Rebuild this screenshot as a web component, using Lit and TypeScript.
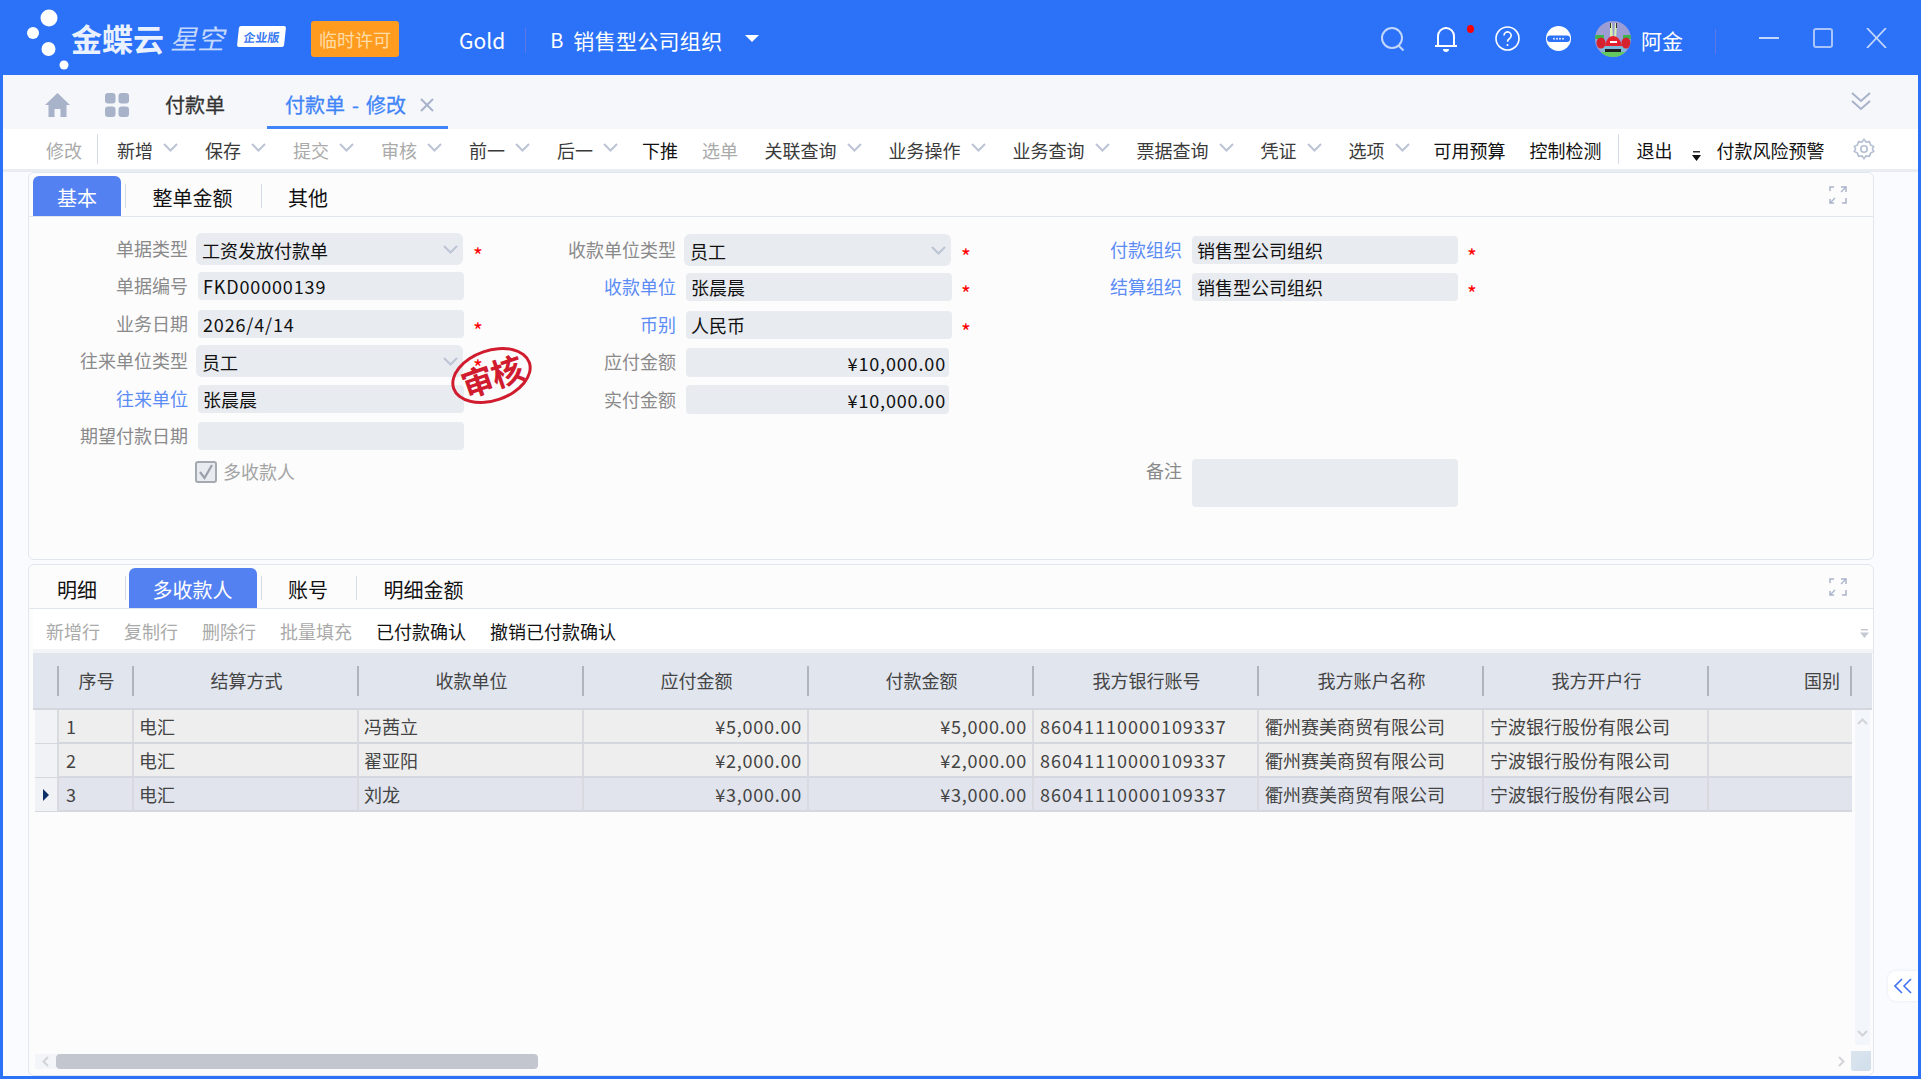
import { LitElement, css, html, svg } from 'lit'
import { customElement } from 'lit/decorators.js'
import { classMap } from 'lit/directives/class-map.js'

const chevron = svg`<polyline points="1,1 7.5,7.5 14,1" fill="none" stroke="#bcc4d6" stroke-width="2"/>`

type ToolItem = { text: string; off?: boolean; menu?: boolean; cls?: string }

const toolItems: ToolItem[] = [
  { text: '新增', menu: true },
  { text: '保存', menu: true },
  { text: '提交', menu: true, off: true },
  { text: '审核', menu: true, off: true },
  { text: '前一', menu: true },
  { text: '后一', menu: true, cls: 'tight' },
  { text: '下推', cls: 'dark' },
  { text: '选单', off: true, cls: 'loose' },
  { text: '关联查询', menu: true },
  { text: '业务操作', menu: true },
  { text: '业务查询', menu: true },
  { text: '票据查询', menu: true },
  { text: '凭证', menu: true },
  { text: '选项', menu: true, cls: 'tight' },
  { text: '可用预算', cls: 'dark' },
  { text: '控制检测', cls: 'dark' },
]

const headers = ['序号', '结算方式', '收款单位', '应付金额', '付款金额', '我方银行账号', '我方账户名称', '我方开户行', '国别']

const rows = [
  ['1', '电汇', '冯茜立', '¥5,000.00', '¥5,000.00'],
  ['2', '电汇', '翟亚阳', '¥2,000.00', '¥2,000.00'],
  ['3', '电汇', '刘龙', '¥3,000.00', '¥3,000.00'],
]

@customElement('app-root')
export class AppRoot extends LitElement {
  static styles = css`
    :host {
      display: block;
      position: relative;
      width: 1921px;
      height: 1079px;
      overflow: hidden;
      background: #2b72f9;
      font-family: 'Noto Sans CJK SC', 'Noto Sans', sans-serif;
      font-size: 18px;
      color: #222;
    }
    svg { display: block; flex: none; }

    /* top bar */
    .top {
      height: 75px;
      display: flex;
      align-items: center;
      padding-right: 34px;
      color: #fff;
      line-height: 28px;
    }
    .logo-dots { width: 71px; height: 75px; }
    .brand { font-size: 31px; font-weight: 700; line-height: 40px; opacity: .9; }
    .brand2 { font-size: 27px; font-style: italic; font-weight: 400; margin-left: 6px; opacity: .72; line-height: 40px; }
    .edition {
      margin-left: 14px;
      margin-top: -2px;
      width: 47px;
      height: 21px;
      background: #fff;
      color: #3b7af0;
      font-size: 12px;
      font-weight: 700;
      line-height: 21px;
      text-align: center;
      border-radius: 2px;
      transform: skewX(-6deg);
      overflow: hidden;
      white-space: nowrap;
    }
    .license {
      margin-left: 26px;
      margin-top: 3px;
      width: 88px;
      height: 36px;
      background: #ff9c1f;
      color: #ffdca8;
      border-radius: 3px;
      text-align: center;
      line-height: 36px;
      font-size: 18px;
    }
    .gold { margin-left: 60px; margin-top: 4px; font-size: 21px; }
    .bar-sep { width: 1px; height: 25px; background: #5d78e6; flex: none; margin-top: 6px; }
    .gold + .bar-sep { margin-left: 20px; }
    .org-b { margin-left: 24px; margin-top: 4px; font-size: 20px; }
    .org { margin-left: 10px; margin-top: 4px; font-size: 21px; letter-spacing: .3px; }
    .org-arrow { margin-left: 23px; margin-top: 2px; width: 0; height: 0; border-left: 7px solid transparent; border-right: 7px solid transparent; border-top: 7px solid #fff; }
    .right { margin-left: auto; display: flex; align-items: center; margin-top: 2px; }
    .i-bell { margin-left: 29px; position: relative; }
    .dot { position: absolute; left: 33px; top: -1px; width: 7px; height: 8px; border-radius: 50%; background: #f00; }
    .i-help { margin-left: 37px; }
    .i-min { margin-left: 26px; }
    .avatar { margin-left: 24px; width: 36px; height: 36px; }
    .user { margin-left: 10px; margin-top: 3px; font-size: 21px; }
    .user + .bar-sep { margin-left: 32px; }
    .w-min { margin-left: 43px; margin-top: -1px; }
    .w-max { margin-left: 34px; margin-top: -1px; }
    .w-close { margin-left: 33px; margin-top: -1px; }

    /* page under the bar */
    .page {
      height: 1001px;
      margin: 0 3px 3px;
      background: #f9fbff;
      display: flex;
      flex-direction: column;
    }
    .nav {
      height: 54px;
      box-sizing: border-box;
      padding: 6px 47px 0 42px;
      flex: none;
      background: #f5f7fb;
      display: flex;
      align-items: center;
      font-size: 20px;
      line-height: 30px;
    }
    .grid-icon { margin-left: 35px; }
    .nav-list { margin-left: 36px; color: #333; -webkit-text-stroke: .3px #333; }
    .nav-active {
      margin-left: 42px;
      height: 54px;
      width: 181px;
      padding: 9px 0 0 18px;
      box-sizing: border-box;
      align-self: flex-end;
      border-bottom: 3px solid #3f85f7;
      color: #3f85f7;
      -webkit-text-stroke: .3px #3f85f7;
      word-spacing: 2.5px;
      display: flex;
      align-items: center;
      white-space: nowrap;
    }
    .nav-x { margin-left: 14px; }
    .nav-fold { margin-left: auto; margin-top: -8px; }

    .tools {
      height: 38px;
      padding: 2px 0 0 43px;
      flex: none;
      box-sizing: content-box;
      background: #fff;
      border-bottom: 3px solid #e9ecf2;
      display: flex;
      align-items: center;
      line-height: 26px;
      color: #3a3a3a;
      white-space: nowrap;
    }
    .t-first { color: #aaa; }
    .t-sep { width: 1px; height: 30px; background: #d5dbe6; flex: none; margin-top: -2px; }
    .t-first + .t-sep { margin: -2px 19px 0 15px; }
    .t-item { display: flex; align-items: center; margin-right: 24px; }
    .t-item.menu { margin-right: 27px; }
    .t-item.tight { margin-right: 24px; }
    .t-item.loose { margin-right: 26.5px; }
    .t-item.off { color: #aaa; }
    .t-item.dark { color: #111; }
    .t-item svg { margin: -5px 0 0 10px; }
    .t-end-sep { width: 1px; height: 30px; background: #d5dbe6; flex: none; margin: -2px 18px 0 -8px; }
    .t-exit { color: #111; }
    .t-down { margin: 12px 0 0 19px; }
    .t-risk { margin-left: 16px; color: #111; }
    .t-gear { margin-left: 28px; margin-top: -2px; }

    /* panels */
    .panel {
      margin-left: 25px;
      width: 1846px;
      box-sizing: border-box;
      background: #fcfcfd;
      border: 1px solid #e2e6ef;
      border-radius: 6px;
    }
    .upper { height: 388px; flex: none; margin-bottom: 4px; }
    .lower { flex: 1; min-height: 0; display: flex; flex-direction: column; }

    .tabs {
      flex: none;
      height: 40px;
      margin-top: 3px;
      padding: 0 26px 0 4px;
      border-bottom: 1px solid #e2e6ef;
      display: flex;
      align-items: center;
      font-size: 20px;
      color: #111;
    }
    .tab { padding: 0 24px; height: 40px; line-height: 43px; }
    .tab.on { background: #5481f2; color: #fff; border-radius: 6px 6px 0 0; }
    .tab-sep { width: 1px; height: 24px; background: #d5dbe6; margin: 0 2.5px 0 4px; flex: none; }
    .expand { margin-left: auto; margin-top: -3px; }

    .form { display: flex; padding: 13px 0 0 1px; position: relative; }
    .col {
      width: 488px;
      flex: none;
      display: grid;
      grid-template-columns: 158px 266px 1fr;
      column-gap: 10px;
      grid-auto-rows: 37.5px;
      align-items: center;
    }
    .col.second { margin-top: 1px; }
    .col.third { margin-left: 18px; margin-top: 1px; }
    .lbl { text-align: right; color: #8a8a8a; line-height: 24px; margin-top: -2px; white-space: nowrap; }
    .lbl.link { color: #5b8cf5; }
    .field {
      height: 28px;
      background: #e8ebf0;
      border-radius: 4px;
      padding: 0 5px;
      line-height: 29px;
      color: #111;
      white-space: nowrap;
    }
    .field.latin { letter-spacing: .85px; }
    .field.tall { height: 29px; line-height: 31px; }
    .field.num { text-align: right; padding-right: 3px; width: 255px; }
    .field.sel {
      height: 32px;
      width: 261px;
      margin-left: -2px;
      padding: 0 0 0 6px;
      line-height: 35px;
      border-radius: 6px;
      display: flex;
      justify-content: space-between;
    }
    .field.sel svg { margin: 12px 5px 0 0; }
    .star { color: #f00; font-size: 21px; line-height: 18px; padding: 8px 0 0 0; height: 14px; margin-left: -1px; }
    .check { grid-column: 2; display: flex; align-items: center; margin: -3px 0 0 -3px; color: #a4a4a4; line-height: 24px; }
    .check span { margin-top: -2px; }
    .box {
      width: 22px;
      height: 22px;
      box-sizing: border-box;
      border: 2px solid #a5a9b0;
      border-radius: 3px;
      background: #e8ebf0;
      margin-right: 6px;
    }
    .note-row { grid-row: 7; }
    .lbl.note-row { margin-top: -9px; }
    .note { height: 48px; align-self: start; margin-top: 3px; }

    .stamp {
      position: absolute;
      left: 421px;
      top: 132px;
      width: 77px;
      height: 47px;
      border: 3.5px solid #d01c2e;
      border-radius: 50%;
      transform: rotate(-19deg);
      color: #d01c2e;
      font-size: 32px;
      font-weight: 700;
      line-height: 47px;
      letter-spacing: -1px;
      text-align: center;
      white-space: nowrap;
    }

    /* grid */
    .subtools {
      flex: none;
      height: 37px;
      padding: 3px 4px 0 13px;
      margin: 0 0 0 4px;
      background: #fff;
      border-bottom: 4px solid #f3f4f6;
      display: flex;
      align-items: center;
      line-height: 26px;
      color: #111;
      white-space: nowrap;
    }
    .subtools span { margin-right: 24px; }
    .subtools span.off { color: #aaa; }
    .subtools svg { margin: 5px 0 0 auto; }
    .head {
      flex: none;
      margin: 0 1px 0 4px;
      height: 55px;
      background: #e1e5ee;
      border-bottom: 2px solid #d4d7dd;
      display: grid;
      grid-template-columns: 26px 75px repeat(7, 225px) 143px;
      color: #444;
      line-height: 55px;
      text-align: center;
    }
    .head div { position: relative; }
    .head div::after {
      content: '';
      position: absolute;
      right: 0;
      top: 13px;
      height: 30px;
      width: 2px;
      background: #b0b4bc;
    }
    .head .last { text-align: right; padding-right: 12px; }
    .body { flex: 1; min-height: 0; display: flex; margin: 0 5px 0 6px; }
    .rows { flex: 1; }
    .row {
      height: 34px;
      box-sizing: border-box;
      background: #eee;
      border-bottom: 2px solid #d4d7dd;
      display: grid;
      grid-template-columns: 24px 75px repeat(7, 225px) 143px;
      line-height: 33px;
      color: #444;
      white-space: nowrap;
    }
    .row.sel { background: #e1e4ed; }
    .row > div { border-right: 2px solid #d8dadf; padding: 0 6px 0 5px; min-width: 0; }
    .row > .mark { background: #f0f2f6; padding: 0; display: flex; align-items: center; justify-content: center; }
    .row > .num { text-align: right; padding-right: 5px; letter-spacing: .75px; }
    .row > .acct { letter-spacing: 1px; padding-left: 6px; }
    .row > .seq { padding-left: 7px; }
    .row > .wide { padding-left: 6px; }
    .row > .tail { border-right: none; }
    .vbar {
      width: 15px;
      flex: none;
      margin: 0 0 6px 3px;
      background: #f3f6fb;
      display: flex;
      flex-direction: column;
      justify-content: space-between;
      align-items: center;
      padding: 8px 0;
      box-sizing: border-box;
    }
    .foot { flex: none; height: 20px; margin: 0 2px 4px 6px; display: flex; align-items: center; }
    .arrow-left { width: 21px; height: 15px; background: #f3f5f9; display: flex; align-items: center; justify-content: center; }
    .thumb { width: 482px; height: 15px; background: #c3c6cf; border-radius: 4px; }
    .arrow-right { margin-left: auto; margin-right: 6px; }
    .corner { width: 20px; height: 20px; background: linear-gradient(135deg, #dbe5ef, #d0deeb); border-radius: 0 0 3px 3px; }

    .fold {
      position: absolute;
      right: 3px;
      top: 971px;
      width: 30px;
      height: 30px;
      background: #fff;
      border-radius: 8px 0 0 8px;
      box-shadow: 0 0 3px rgba(60, 80, 120, .12);
      display: flex;
      align-items: center;
      justify-content: center;
    }
  `

  private topBar() {
    return html`
      <div class="top">
        <svg class="logo-dots" viewBox="0 0 71 75">
          <circle cx="49" cy="18" r="8.5" fill="#fff"/>
          <circle cx="33" cy="33" r="6" fill="#fff"/>
          <circle cx="48.5" cy="49" r="7" fill="#fff"/>
          <circle cx="64" cy="65" r="4.5" fill="#fff"/>
        </svg>
        <span class="brand">金蝶云</span>
        <span class="brand2">星空</span>
        <div class="edition">企业版</div>
        <div class="license">临时许可</div>
        <span class="gold">Gold</span>
        <div class="bar-sep"></div>
        <span class="org-b">B</span>
        <span class="org">销售型公司组织</span>
        <div class="org-arrow"></div>
        <div class="right">
          <svg width="24" height="24" viewBox="0 0 24 24" fill="none" stroke="#c3d6fc" stroke-width="2">
            <circle cx="11" cy="11" r="10"/><line x1="17.5" y1="18.5" x2="22.5" y2="23.5"/>
          </svg>
          <div class="i-bell">
            <svg width="24" height="26" viewBox="0 0 24 26" fill="none" stroke="#fff" stroke-width="2">
              <path d="M1 20h22M4 20V10a8 8 0 0 1 16 0v10M12 1v1"/>
              <path d="M9 23h6a3 3 0 0 1-6 0z" fill="#fff" stroke="none"/>
            </svg>
            <div class="dot"></div>
          </div>
          <svg class="i-help" width="25" height="25" viewBox="0 0 25 25" fill="none" stroke="#fff" stroke-width="1.6">
            <circle cx="12.5" cy="12.5" r="11.5"/>
            <path d="M9 9.5a3.6 3.6 0 1 1 5.6 3c-1.4 1-2.1 1.6-2.1 3.3"/>
            <line x1="12.5" y1="18" x2="12.5" y2="20"/>
          </svg>
          <svg class="i-min" width="25" height="25" viewBox="0 0 25 25">
            <circle cx="12.5" cy="12.5" r="12.5" fill="#fff"/>
            <rect x="1" y="9.5" width="23" height="6.5" rx="3" fill="#2b72f9"/>
            <g fill="#dfe9fd"><circle cx="8" cy="12.7" r="1"/><circle cx="11" cy="12.7" r="1"/><circle cx="14" cy="12.7" r="1"/><circle cx="17" cy="12.7" r="1"/></g>
          </svg>
          <svg class="avatar" viewBox="0 0 36 36">
            <defs><clipPath id="av"><circle cx="18" cy="18" r="18"/></clipPath></defs>
            <g clip-path="url(#av)">
              <rect width="36" height="36" fill="#9c9dd4"/>
              <rect y="31" width="36" height="5" fill="#63c95f"/>
              <path d="M15 2h2l1 16h-3zM20 2h2l-1 16h-2z" fill="#d9f0b2"/>
              <path d="M15 2h1v5h-1zM21 2h1v5h-1z" fill="#333"/>
              <path d="M7 25h23l2 4-4 2H9l-4-2z" fill="#7fb9da"/>
              <rect x="10" y="28" width="16" height="3" fill="#1d1d1d"/>
              <path d="M18 15c4 0 8 4 9 10H10c1-6 4-10 8-10z" fill="#e3202b"/>
              <rect x="15" y="20" width="7" height="2" fill="#fff"/>
              <rect x="0" y="14" width="9" height="4" fill="#3eb34a"/>
              <rect x="28" y="14" width="8" height="4" fill="#3eb34a"/>
              <ellipse cx="6" cy="22" rx="4.5" ry="5.500" fill="#d6222c"/>
              <ellipse cx="31" cy="22" rx="4.500" ry="5.500" fill="#d6222c"/>
            </g>
          </svg>
          <span class="user">阿金</span>
          <div class="bar-sep"></div>
          <svg class="w-min" width="20" height="20" viewBox="0 0 20 20"><line x1="0" y1="10" x2="20" y2="10" stroke="#c3d6fc" stroke-width="2"/></svg>
          <svg class="w-max" width="20" height="20" viewBox="0 0 20 20"><rect x="1" y="1" width="18" height="18" rx="2" fill="none" stroke="#a9c4fa" stroke-width="2"/></svg>
          <svg class="w-close" width="21" height="20" viewBox="0 0 21 20" stroke="#c3d6fc" stroke-width="1.8"><line x1="1" y1="0" x2="20" y2="20"/><line x1="20" y1="0" x2="1" y2="20"/></svg>
        </div>
      </div>
    `
  }

  private navBar() {
    return html`
      <div class="nav">
        <svg width="25" height="24" viewBox="0 0 25 24" fill="#a8b3c9">
          <path d="M12.5 0L0 12h3.500v12h6v-8h6v8h6V12H25z"/>
        </svg>
        <svg class="grid-icon" width="24" height="24" viewBox="0 0 24 24" fill="#a8b3c9">
          <rect width="10.500" height="10.500" rx="3"/><rect x="13.500" width="10.500" height="10.500" rx="3"/>
          <rect y="13.500" width="10.500" height="10.500" rx="3"/><rect x="13.500" y="13.500" width="10.500" height="10.500" rx="3"/>
        </svg>
        <span class="nav-list">付款单</span>
        <div class="nav-active">付款单 - 修改
          <svg class="nav-x" width="14" height="14" viewBox="0 0 14 14" stroke="#a8b3c9" stroke-width="2"><line x1="1" y1="1" x2="13" y2="13"/><line x1="13" y1="1" x2="1" y2="13"/></svg>
        </div>
        <svg class="nav-fold" width="20" height="19" viewBox="0 0 20 19" fill="none" stroke="#a8b3c9" stroke-width="2">
          <polyline points="1,1 10,9 19,1"/><polyline points="1,9 10,17 19,9"/>
        </svg>
      </div>
    `
  }

  private toolBar() {
    return html`
      <div class="tools">
        <span class="t-first">修改</span>
        <div class="t-sep"></div>
        ${toolItems.map(i => html`
          <div class=${classMap({ 't-item': true, menu: !!i.menu, off: !!i.off, dark: i.cls === 'dark', tight: i.cls === 'tight', loose: i.cls === 'loose' })}>
            ${i.text}
            ${i.menu ? html`<svg width="15" height="9" viewBox="0 0 15 9">${chevron}</svg>` : ''}
          </div>
        `)}
        <div class="t-end-sep"></div>
        <span class="t-exit">退出</span>
        <svg class="t-down" width="9" height="10" viewBox="0 0 9 10"><rect x="1" y="0" width="7" height="1.500" fill="#333"/><path d="M0 4h9L4.500 10z" fill="#111"/></svg>
        <span class="t-risk">付款风险预警</span>
        <svg class="t-gear" width="22" height="24" viewBox="0 0 24 24" fill="none" stroke="#b5bfd3" stroke-width="1.800">
          <circle cx="12" cy="12" r="3.500"/>
          <path d="M12 1.500l2.200 3 3.700-.5 1.300 3.500 3.300 1.800-1.300 2.700 1.300 2.700-3.300 1.800-1.300 3.500-3.700-.5-2.200 3-2.200-3-3.700.5-1.300-3.500-3.300-1.800 1.300-2.700L1.500 9.300l3.300-1.800L6.100 4l3.700.5z"/>
        </svg>
      </div>
    `
  }

  private field(label: string, value: string, opts: { link?: boolean; sel?: boolean; star?: boolean; num?: boolean; tall?: boolean; latin?: boolean } = {}) {
    return html`
      <div class=${classMap({ lbl: true, link: !!opts.link })}>${label}</div>
      <div class=${classMap({ field: true, sel: !!opts.sel, num: !!opts.num, tall: !!opts.tall, latin: !!opts.latin || !!opts.num })}>
        <span>${value}</span>
        ${opts.sel ? html`<svg width="15" height="9" viewBox="0 0 15 9">${chevron}</svg>` : ''}
      </div>
      <div class="star">${opts.star ? '*' : ''}</div>
    `
  }

  private expandIcon() {
    return html`
      <svg class="expand" width="18" height="18" viewBox="0 0 18 18" fill="none" stroke="#a8b3c9" stroke-width="1.500">
        <path d="M1 5V1h4M12 1h5v5M17 12v5h-4M1 13v4h4"/>
        <path d="M17 1l-5 5M1 17l5-5" stroke-width="1.200"/>
      </svg>
    `
  }

  private upperPanel() {
    return html`
      <div class="panel upper">
        <div class="tabs">
          <div class="tab on">基本</div>
          <div class="tab-sep"></div>
          <div class="tab">整单金额</div>
          <div class="tab-sep"></div>
          <div class="tab">其他</div>
          ${this.expandIcon()}
        </div>
        <div class="form">
          <div class="col">
            ${this.field('单据类型', '工资发放付款单', { sel: true, star: true })}
            ${this.field('单据编号', 'FKD00000139', { latin: true })}
            ${this.field('业务日期', '2026/4/14', { star: true, latin: true })}
            ${this.field('往来单位类型', '员工', { sel: true, star: true })}
            ${this.field('往来单位', '张晨晨', { link: true })}
            ${this.field('期望付款日期', '')}
            <div class="check">
              <div class="box">
                <svg width="18" height="18" viewBox="0 0 18 18" fill="none" stroke="#9aa0a9" stroke-width="2.200"><polyline points="3,9 7.500,15 15,2"/></svg>
              </div>
              <span>多收款人</span>
            </div>
          </div>
          <div class="col second">
            ${this.field('收款单位类型', '员工', { sel: true, star: true })}
            ${this.field('收款单位', '张晨晨', { link: true, star: true })}
            ${this.field('币别', '人民币', { link: true, star: true })}
            ${this.field('应付金额', '¥10,000.00', { num: true, tall: true })}
            ${this.field('实付金额', '¥10,000.00', { num: true, tall: true })}
          </div>
          <div class="col third">
            ${this.field('付款组织', '销售型公司组织', { link: true, star: true })}
            ${this.field('结算组织', '销售型公司组织', { link: true, star: true })}
            <div class="lbl note-row">备注</div>
            <div class="field note-row note"></div>
          </div>
          <div class="stamp">审核</div>
        </div>
      </div>
    `
  }

  private lowerPanel() {
    return html`
      <div class="panel lower">
        <div class="tabs">
          <div class="tab">明细</div>
          <div class="tab-sep"></div>
          <div class="tab on">多收款人</div>
          <div class="tab-sep"></div>
          <div class="tab">账号</div>
          <div class="tab-sep"></div>
          <div class="tab">明细金额</div>
          ${this.expandIcon()}
        </div>
        <div class="subtools">
          <span class="off">新增行</span>
          <span class="off">复制行</span>
          <span class="off">删除行</span>
          <span class="off">批量填充</span>
          <span>已付款确认</span>
          <span>撤销已付款确认</span>
          <svg width="9" height="9" viewBox="0 0 9 9"><rect x="1" y="0" width="7" height="1.500" fill="#c5c9d2"/><path d="M0 3.500h9L4.500 9z" fill="#c5c9d2"/></svg>
        </div>
        <div class="head">
          <div></div>
          ${headers.map((h, i) => html`<div class=${i === headers.length - 1 ? 'last' : ''}>${h}</div>`)}
        </div>
        <div class="body">
          <div class="rows">
            ${rows.map((r, i) => html`
              <div class=${classMap({ row: true, sel: i === rows.length - 1 })}>
                <div class="mark">
                  ${i === rows.length - 1 ? html`<svg width="6" height="12" viewBox="0 0 6 12"><path d="M0 0l6 6-6 6z" fill="#0f2f6b"/></svg>` : ''}
                </div>
                <div class="seq">${r[0]}</div>
                <div>${r[1]}</div>
                <div>${r[2]}</div>
                <div class="num">${r[3]}</div>
                <div class="num">${r[4]}</div>
                <div class="acct">86041110000109337</div>
                <div class="wide">衢州赛美商贸有限公司</div>
                <div class="wide">宁波银行股份有限公司</div>
                <div class="tail"></div>
              </div>
            `)}
          </div>
          <div class="vbar">
            <svg width="11" height="7" viewBox="0 0 11 7" fill="none" stroke="#d2d4d9" stroke-width="2"><polyline points="1,6 5.500,1.500 10,6"/></svg>
            <svg width="11" height="7" viewBox="0 0 11 7" fill="none" stroke="#d2d4d9" stroke-width="2"><polyline points="1,1 5.500,5.500 10,1"/></svg>
          </div>
        </div>
        <div class="foot">
          <div class="arrow-left">
            <svg width="7" height="11" viewBox="0 0 7 11" fill="none" stroke="#d2d4d9" stroke-width="2"><polyline points="6,1 1.500,5.500 6,10"/></svg>
          </div>
          <div class="thumb"></div>
          <svg class="arrow-right" width="7" height="11" viewBox="0 0 7 11" fill="none" stroke="#d2d4d9" stroke-width="2"><polyline points="1,1 5.500,5.500 1,10"/></svg>
          <div class="corner"></div>
        </div>
      </div>
    `
  }

  render() {
    return html`
      ${this.topBar()}
      <div class="page">
        ${this.navBar()}
        ${this.toolBar()}
        ${this.upperPanel()}
        ${this.lowerPanel()}
      </div>
      <div class="fold">
        <svg width="18" height="16" viewBox="0 0 18 16" fill="none" stroke="#4472f5" stroke-width="1.600"><polyline points="8,1 1,8 8,15"/><polyline points="17,1 10,8 17,15"/></svg>
      </div>
    `
  }
}
